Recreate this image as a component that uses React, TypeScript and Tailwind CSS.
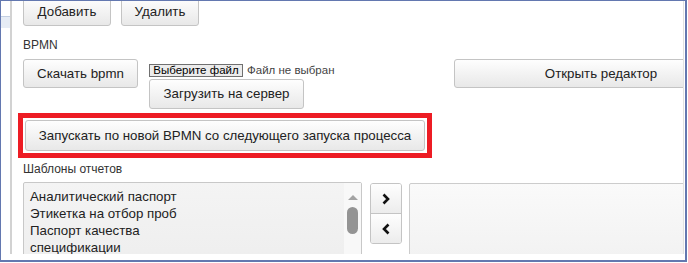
import React from "react";

const btn =
  "flex items-center justify-center shrink-0 whitespace-nowrap rounded-[3px] border border-[#c4c4c4] bg-linear-to-b from-[#fefefe] to-[#e8e8e8] text-[13.3px] text-[#222] leading-none";

function Chevron({ dir }: { dir: "r" | "l" }) {
  return (
    <svg width="10" height="12" viewBox="0 0 10 12">
      {dir === "r" ? (
        <path d="M2.5 1.5 L7 6 L2.5 10.5" fill="none" stroke="#111" strokeWidth="2.6" />
      ) : (
        <path d="M7.5 1.5 L3 6 L7.5 10.5" fill="none" stroke="#111" strokeWidth="2.6" />
      )}
    </svg>
  );
}

export default function App() {
  const items = ["Аналитический паспорт", "Этикетка на отбор проб", "Паспорт качества", "спецификации"];
  return (
    <div className="w-[688px] h-[263px] bg-white" style={{ fontFamily: '"Liberation Sans", Arial, sans-serif' }}>
      <div className="w-[687px] h-[262px] border-t border-l border-r-2 border-b-2 border-[#6378b0] flex">
        {/* left strip */}
        <div className="w-[9px] shrink-0 flex flex-col">
          <div className="h-[15px]" />
          <div className="h-[12px] bg-[#e6ecf5] border-t border-[#c3cfe2]" />
        </div>
        <div className="w-[2px] h-[253px] shrink-0 bg-[#d2d2d2]" />
        {/* content */}
        <div className="w-[672px] h-[253px] shrink-0 overflow-hidden border-r border-[#e2e2e2] pl-[11px] flex flex-col">
          {/* row 1 */}
          <div className="flex gap-[10px] -mt-[4px]">
            <div className={`${btn} w-[88px] h-[29px]`}>Добавить</div>
            <div className={`${btn} w-[78px] h-[29px]`}>Удалить</div>
          </div>
          <div className="mt-[12px] text-[12px] leading-[14px] text-[#333]">BPMN</div>
          {/* row 3 */}
          <div className="flex mt-[7px]">
            <div className={`${btn} w-[115px] h-[29px]`}>Скачать bpmn</div>
            <div className="w-[183px] ml-[11px] shrink-0 flex flex-col">
              <div className="flex items-center mt-[5px] h-[13px] whitespace-nowrap">
                <span className="h-[13px] w-[94px] shrink-0 justify-center border border-[#707070] bg-[#ececec] text-[11.5px] leading-[11px] text-black flex items-center whitespace-nowrap">
                  Выберите файл
                </span>
                <span className="ml-[4px] text-[11.5px] leading-[13px] text-[#444] whitespace-nowrap">Файл не выбран</span>
              </div>
              <div className={`${btn} w-[155px] h-[30px] mt-[2px]`}>Загрузить на сервер</div>
            </div>
            <div className={`${btn} w-[294px] h-[29px] ml-[122px]`}>Открыть редактор</div>
          </div>
          {/* red box */}
          <div className="mt-[4px] -ml-[5px] w-[414px] h-[45px] shrink-0 border-[5px] border-[#ed1c24] p-[2px]">
            <div className={`${btn} w-full h-[31px]`}>Запускать по новой BPMN со следующего запуска процесса</div>
          </div>
          <div className="mt-[4px] text-[12px] leading-[14px] text-[#333]">Шаблоны отчетов</div>
          {/* row 6 */}
          <div className="flex mt-[6px]">
            <div className="w-[339px] h-[110px] shrink-0 border border-[#c8c8c8] rounded-[2px] bg-linear-to-b from-[#f4f4f4] to-[#ececec] flex">
              <div className="flex-1 pl-[6px] pt-[5px] text-[13.3px] leading-[17px] text-[#222]">
                {items.map((t) => (
                  <div key={t} className="whitespace-nowrap">
                    {t}
                  </div>
                ))}
              </div>
              <div className="w-[17px] shrink-0 bg-[#f8f8f8] flex flex-col items-center">
                <div className="mt-[12px] w-0 h-0 border-l-[5px] border-r-[5px] border-b-[5px] border-l-transparent border-r-transparent border-b-[#a3a3a3]" />
                <div className="mt-[7px] w-[11px] h-[27px] rounded-full bg-[#949494]" />
              </div>
            </div>
            <div className="ml-[8px] w-[32px] h-[61px] shrink-0 border border-[#c4c4c4] rounded-[3px] flex flex-col overflow-hidden mt-[1px]">
              <div className="h-[30px] flex items-center justify-center bg-linear-to-b from-[#fefefe] to-[#ececec] border-b border-[#c4c4c4]">
                <Chevron dir="r" />
              </div>
              <div className="flex-1 flex items-center justify-center bg-linear-to-b from-[#fefefe] to-[#ececec]">
                <Chevron dir="l" />
              </div>
            </div>
            <div className="ml-[7px] w-[290px] h-[110px] shrink-0 mt-[1px] border border-[#cccccc] rounded-[2px] bg-linear-to-b from-[#fafafa] to-[#eeeeee]" />
          </div>
        </div>
      </div>
    </div>
  );
}
